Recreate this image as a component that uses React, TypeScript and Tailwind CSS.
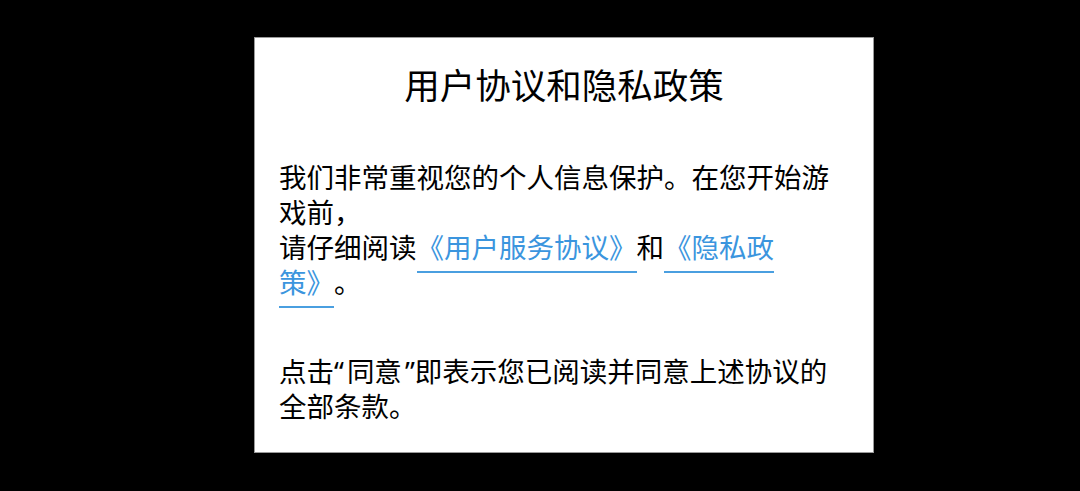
import React from "react";

export default function App() {
  const font = { fontFamily: '"Noto Sans", "Noto Sans CJK SC", sans-serif' };
  return (
    <div className="w-[1080px] h-[491px] bg-black pt-[37px] pl-[254px]">
      <div
        className="w-[620px] h-[416px] bg-white border border-[#9a9a9a] pl-[24px] pr-[36px] text-black [text-spacing-trim:space-all]"
        style={font}
      >
        <h1 className="text-center text-[35.5px] leading-[49px] pt-[23px] pl-[12px] font-normal">
          用户协议和隐私政策
        </h1>
        <p className="mt-[50px] text-[27.5px] leading-[35px]">
          我们非常重视您的个人信息保护。在您开始游戏前，
          <br />
          请仔细阅读
          <span className="text-[#3b95de] border-b-2 border-[#4a9fe0] pb-[5px]">《用户服务协议》</span>
          和
          <span className="text-[#3b95de] border-b-2 border-[#4a9fe0] pb-[5px]">《隐私政策》</span>
          。
        </p>
        <p className="mt-[54px] text-[27.5px] leading-[35px]">
          点击<span className="pr-[3px]">“</span>同意<span className="pl-[3px]">”</span>即表示您已阅读并同意上述协议的全部条款。
        </p>
      </div>
    </div>
  );
}
